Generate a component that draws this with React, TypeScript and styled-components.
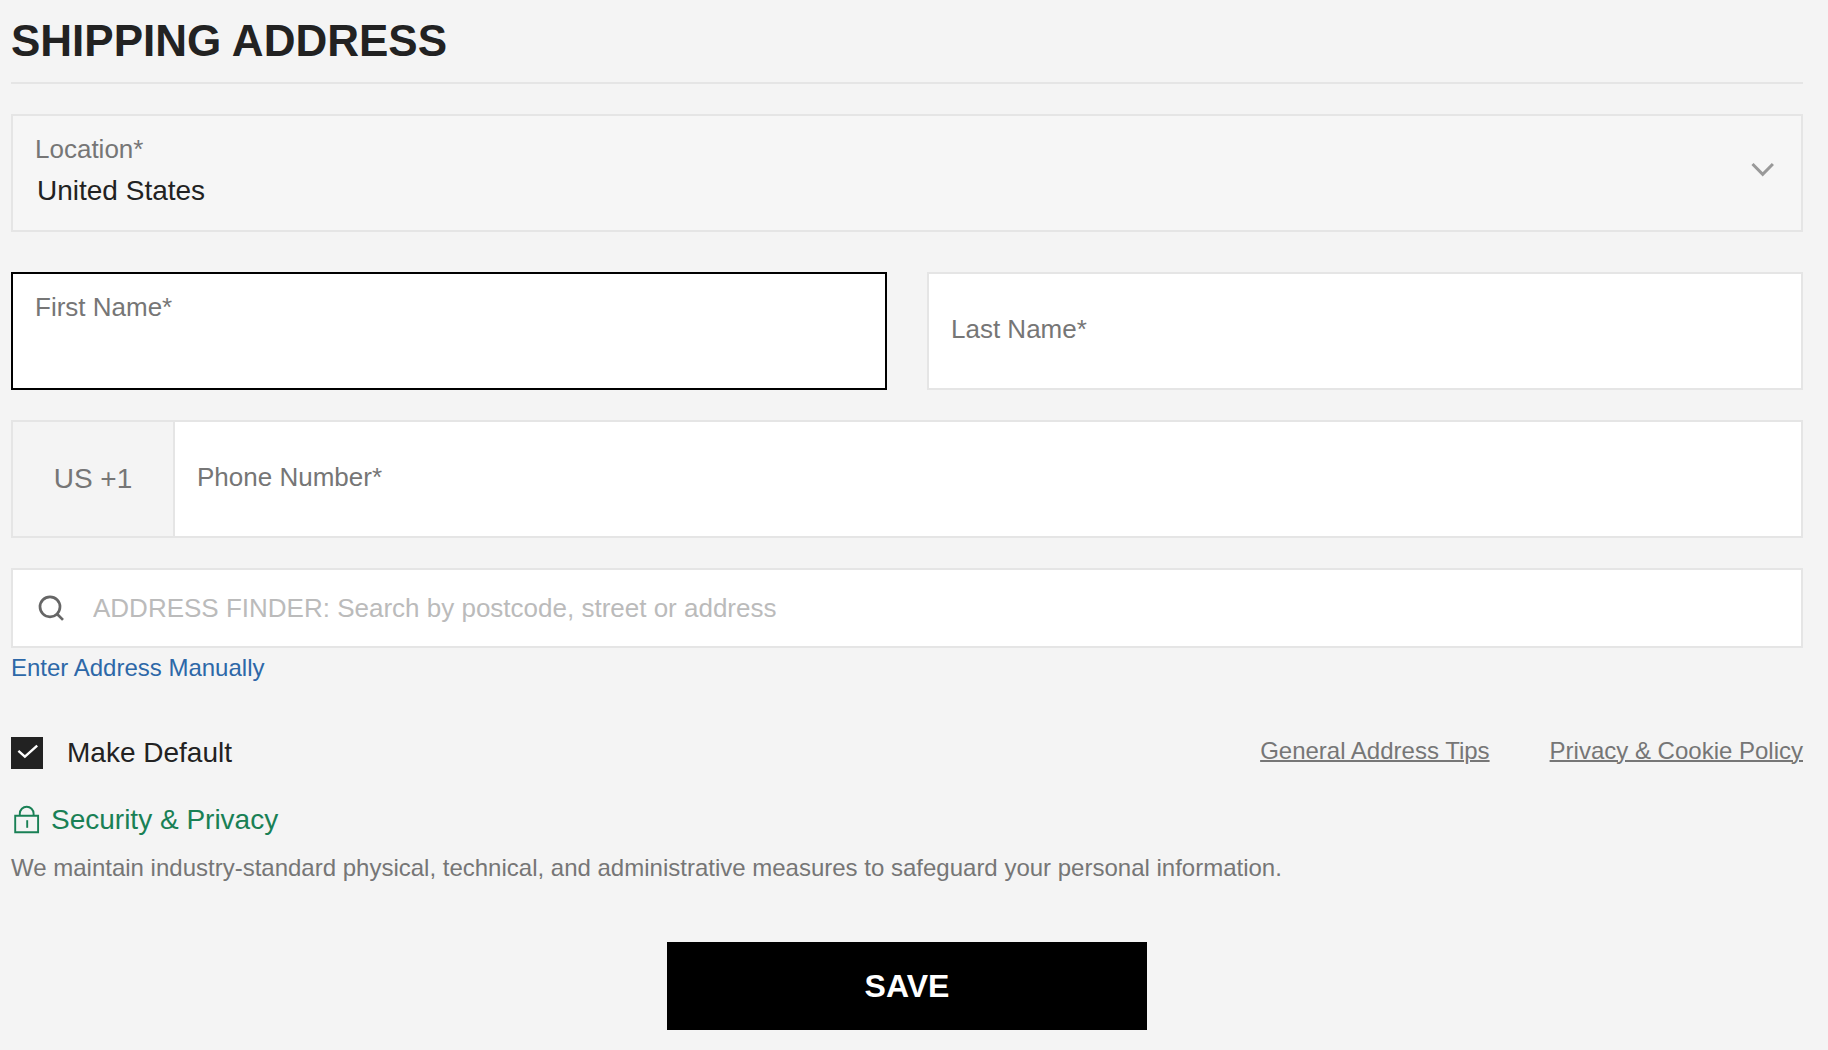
import React, { useState } from 'react';
import styled, { createGlobalStyle, css } from 'styled-components';

const GlobalStyle = createGlobalStyle`
  *, *::before, *::after { box-sizing: border-box; }
  body {
    margin: 0;
    background: #f4f4f4;
    color: #222;
    font-family: Arial, "Liberation Sans", sans-serif;
  }
  input, select, button { font-family: inherit; }
`;

const Form = styled.form`
  display: flex;
  flex-direction: column;
  padding: 15px 25px 20px 11px;
`;

const Title = styled.h1`
  margin: 0 0 30px;
  padding-bottom: 15px;
  border-bottom: 2px solid #e5e5e5;
  font-size: 44px;
  line-height: 52px;
  font-weight: 700;
`;

const Field = styled.div<{ $focused?: boolean; $muted?: boolean }>`
  position: relative;
  display: flex;
  flex: 1;
  border: 2px solid ${(p) => (p.$focused ? '#000' : '#e5e5e5')};
  background: ${(p) => (p.$muted ? '#f6f6f6' : '#fff')};
`;

const FieldLabel = styled.label<{ $raised: boolean }>`
  position: absolute;
  left: 22px;
  top: ${(p) => (p.$raised ? 17 : 39)}px;
  color: #767676;
  font-size: 26px;
  line-height: 32px;
  pointer-events: none;
`;

const control = css`
  width: 100%;
  height: 114px;
  margin: 0;
  border: 0;
  border-radius: 0;
  outline: 0;
  background: transparent;
  color: #222;
  font-size: 28px;
  appearance: none;
`;

const TextInput = styled.input`
  ${control}
  padding: 35px 22px 0;
`;

const Select = styled.select`
  ${control}
  padding: 35px 64px 0 24px;
`;

const Chevron = styled.svg`
  position: absolute;
  right: 26px;
  top: 46px;
  pointer-events: none;
`;

const NameRow = styled.div`
  display: flex;
  gap: 40px;
  margin: 40px 0 30px;
`;

const PhoneRow = styled.div`
  display: flex;
  border: 2px solid #e5e5e5;
`;

const PhoneField = styled(Field)`
  border: 0;
`;

const Prefix = styled.span`
  display: flex;
  align-items: center;
  justify-content: center;
  width: 162px;
  border-right: 2px solid #e5e5e5;
  color: #767676;
  font-size: 28px;
`;

const SearchBox = styled.label`
  display: flex;
  align-items: center;
  gap: 28px;
  height: 80px;
  margin-top: 30px;
  padding: 0 24px;
  border: 2px solid #e5e5e5;
  background: #fff;
`;

const SearchInput = styled.input`
  flex: 1;
  min-width: 0;
  padding: 0;
  border: 0;
  outline: 0;
  background: transparent;
  color: #222;
  font-size: 26px;
  line-height: 32px;
  &::placeholder { color: #bbb; opacity: 1; }
`;

const ManualLink = styled.a`
  align-self: flex-start;
  margin-top: 4px;
  color: #2d68a8;
  font-size: 24px;
  line-height: 32px;
  text-decoration: none;
`;

const OptionsRow = styled.div`
  display: flex;
  justify-content: space-between;
  align-items: flex-start;
  margin-top: 53px;
`;

const CheckLabel = styled.label`
  display: flex;
  align-items: center;
  gap: 24px;
  font-size: 28px;
  line-height: 32px;
`;

const CheckBox = styled.span`
  display: grid;
  width: 32px;
  height: 32px;
  > * { grid-area: 1 / 1; }
`;

const CheckInput = styled.input`
  width: 32px;
  height: 32px;
  margin: 0;
  border: 2px solid #222;
  background: #fff;
  appearance: none;
  &:checked { background: #222; }
`;

const CheckMark = styled.svg`
  z-index: 1;
  pointer-events: none;
`;

const Links = styled.nav`
  display: flex;
  gap: 60px;
`;

const PolicyLink = styled.a`
  color: #767676;
  font-size: 24px;
  line-height: 28px;
  text-decoration-thickness: 2px;
`;

const Security = styled.h2`
  display: flex;
  align-items: flex-start;
  gap: 8px;
  margin: 34px 0 15px;
  color: #198055;
  font-size: 28px;
  line-height: 34px;
  font-weight: 400;
`;

const Note = styled.p`
  margin: 0;
  color: #767676;
  font-size: 24px;
  line-height: 32px;
`;

const SaveButton = styled.button`
  align-self: center;
  width: 480px;
  max-width: 100%;
  height: 88px;
  margin-top: 58px;
  padding: 0;
  border: 0;
  background: #000;
  color: #fff;
  font-size: 32px;
  font-weight: 700;
`;

type FieldId = 'firstName' | 'lastName' | 'phone';

export default function App() {
  const [focused, setFocused] = useState<FieldId | null>('firstName');
  const [values, setValues] = useState({ firstName: '', lastName: '', phone: '' });
  const [isDefault, setIsDefault] = useState(true);

  const renderInput = (id: FieldId, label: string) => (
    <>
      <TextInput
        id={id}
        type={id === 'phone' ? 'tel' : 'text'}
        value={values[id]}
        onFocus={() => setFocused(id)}
        onBlur={() => setFocused(null)}
        onChange={(e) => setValues({ ...values, [id]: e.target.value })}
      />
      <FieldLabel htmlFor={id} $raised={focused === id || values[id] !== ''}>
        {label}
      </FieldLabel>
    </>
  );

  return (
    <>
      <GlobalStyle />
      <Form onSubmit={(e) => e.preventDefault()}>
        <Title>SHIPPING ADDRESS</Title>

        <Field $muted>
          <Select id="location" defaultValue="us">
            <option value="us">United States</option>
          </Select>
          <FieldLabel htmlFor="location" $raised>
            Location*
          </FieldLabel>
          <Chevron width="24" height="16" viewBox="0 0 24 16" fill="none" stroke="#999" strokeWidth="3" aria-hidden="true">
            <path d="M1.5 2 L11.7 12.4 L21.9 2" />
          </Chevron>
        </Field>

        <NameRow>
          <Field $focused={focused === 'firstName'}>{renderInput('firstName', 'First Name*')}</Field>
          <Field $focused={focused === 'lastName'}>{renderInput('lastName', 'Last Name*')}</Field>
        </NameRow>

        <PhoneRow>
          <Prefix>US +1</Prefix>
          <PhoneField>{renderInput('phone', 'Phone Number*')}</PhoneField>
        </PhoneRow>

        <SearchBox>
          <svg width="28" height="28" viewBox="0 0 28 28" fill="none" stroke="#666" strokeWidth="2.7" aria-hidden="true">
            <circle cx="13" cy="12.8" r="10" />
            <path d="M19.8 19.8 L26 25.9" />
          </svg>
          <SearchInput
            type="text"
            aria-label="Address finder"
            placeholder="ADDRESS FINDER: Search by postcode, street or address"
          />
        </SearchBox>
        <ManualLink href="#manual">Enter Address Manually</ManualLink>

        <OptionsRow>
          <CheckLabel>
            <CheckBox>
              <CheckInput type="checkbox" checked={isDefault} onChange={(e) => setIsDefault(e.target.checked)} />
              {isDefault && (
                <CheckMark width="32" height="32" viewBox="0 0 32 32" fill="none" stroke="#fff" strokeWidth="2.4" aria-hidden="true">
                  <path d="M7.4 13.8 L13.9 19.6 L26.2 8.6" />
                </CheckMark>
              )}
            </CheckBox>
            Make Default
          </CheckLabel>
          <Links>
            <PolicyLink href="#tips">General Address Tips</PolicyLink>
            <PolicyLink href="#privacy">Privacy &amp; Cookie Policy</PolicyLink>
          </Links>
        </OptionsRow>

        <Security>
          <svg width="32" height="32" viewBox="0 0 32 32" fill="none" stroke="#198055" strokeWidth="1.9" aria-hidden="true">
            <path d="M4.2 12.8 H27.1 V29.3 H4.2 Z" />
            <path d="M8.8 12.8 V10.6 A6.9 6.9 0 0 1 22.6 10.6 V12.8" />
            <path d="M16.2 17.2 V24.8" />
          </svg>
          Security &amp; Privacy
        </Security>
        <Note>We maintain industry-standard physical, technical, and administrative measures to safeguard your personal information.</Note>

        <SaveButton type="submit">SAVE</SaveButton>
      </Form>
    </>
  );
}
